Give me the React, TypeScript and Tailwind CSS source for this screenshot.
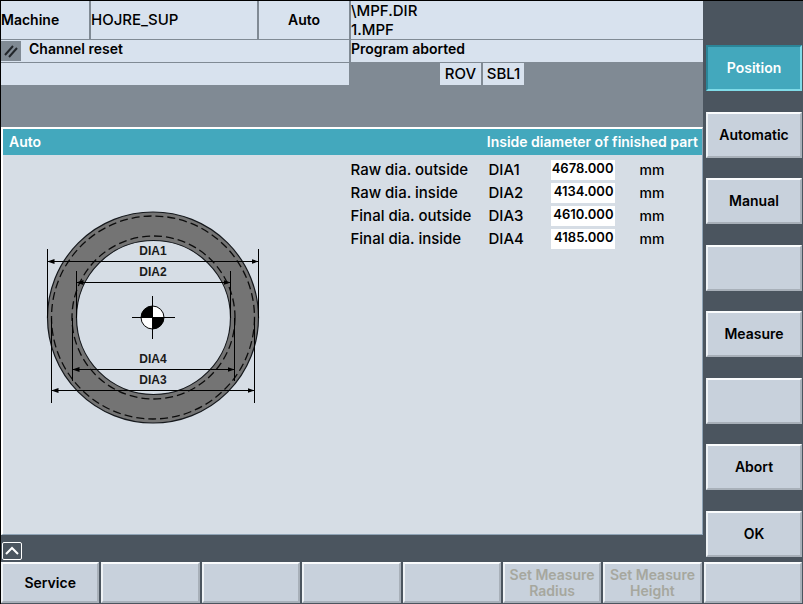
import { useState } from "react";
import clsx from "clsx";

type Field = {
  id: string;
  label: string;
  value: string;
};

type Softkey = {
  label: string;
  disabled?: boolean;
};

const initialFields: Field[] = [
  { id: "DIA1", label: "Raw dia. outside", value: "4678.000" },
  { id: "DIA2", label: "Raw dia. inside", value: "4134.000" },
  { id: "DIA3", label: "Final dia. outside", value: "4610.000" },
  { id: "DIA4", label: "Final dia. inside", value: "4185.000" },
];

const verticalKeys = ["Position", "Automatic", "Manual", "", "Measure", "", "Abort", "OK"];

const horizontalKeys: Softkey[] = [
  { label: "Service" },
  { label: "" },
  { label: "" },
  { label: "" },
  { label: "" },
  { label: "Set Measure Radius", disabled: true },
  { label: "Set Measure Height", disabled: true },
  { label: "" },
];

function RingDiagram() {
  return (
    <svg width="250" height="240" viewBox="0 0 250 240" role="img" aria-label="Ring diameters">
      <defs>
        <marker id="arrow" viewBox="0 0 7 5" refX="7" refY="2.5" markerWidth="7" markerHeight="5" markerUnits="userSpaceOnUse" orient="auto-start-reverse">
          <path d="M0 0 L7 2.5 L0 5 Z" fill="#000" />
        </marker>
      </defs>

      {/* ring body */}
      <path
        d="M17.5 122.5a105.5 105.5 0 1 0 211 0a105.5 105.5 0 1 0 -211 0Z M46.5 122.5a77 77 0 1 0 154 0a77 77 0 1 0 -154 0Z"
        fill="#747474"
        fillRule="evenodd"
        stroke="#15181c"
        strokeWidth="1.2"
      />
      <g fill="none" stroke="#0c0c0c" strokeWidth="1.3" strokeDasharray="8 4">
        <circle cx="123" cy="122.5" r="101.5" />
        <circle cx="123.5" cy="122.5" r="81.5" />
      </g>

      {/* extension lines */}
      <path
        d="M17.5 54V123M228.5 54V123M46.5 76V123M200.5 76V123M42.5 123V186M204.5 123V186M21.5 123V208M224.5 123V208"
        stroke="#000"
        fill="none"
      />

      {/* dimension lines */}
      <g stroke="#000">
        <path d="M17.5 66.5H228.5" markerStart="url(#arrow)" markerEnd="url(#arrow)" />
        <path d="M46.5 87.5H200.5" markerStart="url(#arrow)" markerEnd="url(#arrow)" />
        <path d="M42.5 174.5H204.5" markerStart="url(#arrow)" markerEnd="url(#arrow)" />
        <path d="M21.5 195.5H224.5" markerStart="url(#arrow)" markerEnd="url(#arrow)" />
      </g>

      <g className="font-['Liberation_Sans',sans-serif] text-[12px] font-bold" fill="#1a1a1a" textAnchor="middle">
        <text x="123" y="60">DIA1</text>
        <text x="123" y="81">DIA2</text>
        <text x="123" y="168">DIA4</text>
        <text x="123" y="189">DIA3</text>
      </g>

      {/* centre mark */}
      <circle cx="122.5" cy="122.5" r="11.5" fill="#fff" stroke="#000" />
      <path d="M122.5 122.5V111a11.5 11.5 0 0 0 -11.5 11.5ZM122.5 122.5V134a11.5 11.5 0 0 0 11.5 -11.5Z" fill="#000" />
      <path d="M102 122.5H145M122.5 101V144" stroke="#000" />
    </svg>
  );
}

const keyBase =
  "flex items-center justify-center text-center text-[14px] leading-4 font-semibold border-2";
const keyIdle =
  "bg-[#c8d1dc] border-t-[#fafcfd] border-l-[#eef2f5] border-r-[#a8b0b9] border-b-[#a8b0b9] text-black disabled:text-[#a6a79e]";
const keyActive =
  "bg-[#43a8bd] border-t-[#2b8598] border-l-[#2b8598] border-r-[#7fdbe8] border-b-[#7fdbe8] text-white";

export default function App() {
  const [fields, setFields] = useState(initialFields);
  const [active, setActive] = useState("Position");

  const updateField = (id: string, value: string) => {
    setFields(fields.map((f) => (f.id === id ? { ...f, value } : f)));
  };

  return (
    <div className="min-h-screen flex flex-col bg-[#4b555f] border-t border-l border-black pr-px font-['Inter','Liberation_Sans',sans-serif] text-[15px] leading-5 font-medium text-black">
      <div className="flex-1 flex">
        <div className="flex-1 min-w-0 flex flex-col">
          {/* status header */}
          <header className="h-[126px] bg-[#808a94] grid grid-cols-[87fr_88fr] gap-x-[2px] items-start">
            <div className="flex flex-col gap-px">
              <div className="h-[38px] grid grid-cols-[88fr_166fr_90fr] gap-x-[2px] items-stretch">
                <div className="bg-[#d8e2ee] flex items-center text-[14px] font-semibold">Machine</div>
                <div className="bg-[#d8e2ee] flex items-center">HOJRE_SUP</div>
                <div className="bg-[#d8e2ee] flex items-center justify-center text-[14px] font-semibold">Auto</div>
              </div>
              <div className="h-[22px] bg-[#d8e2ee] flex items-center gap-2">
                <span className="w-5 h-5 bg-[#808a94] flex items-center justify-center">
                  <svg width="14" height="14" viewBox="0 0 14 14" fill="none" stroke="#22262b" strokeWidth="2" aria-hidden="true">
                    <path d="M1 11L9 2M5 13L13 4" />
                  </svg>
                </span>
                <span className="pb-1 text-[14px] font-semibold">Channel reset</span>
              </div>
              <div className="h-[22px] bg-[#d8e2ee]" />
            </div>
            <div className="flex flex-col gap-px">
              <div className="h-[38px] bg-[#d8e2ee] leading-[19px]">
                <div>\MPF.DIR</div>
                <div>1.MPF</div>
              </div>
              <div className="h-[22px] bg-[#d8e2ee] pb-1 flex items-center text-[14px] font-semibold">Program aborted</div>
              <div className="pl-[89px] flex gap-[2px]">
                <span className="w-[41px] h-[22px] bg-[#d8e2ee] flex items-center justify-center">ROV</span>
                <span className="w-[41px] h-[22px] bg-[#d8e2ee] flex items-center justify-center">SBL1</span>
              </div>
            </div>
          </header>

          {/* work area */}
          <main className="flex-1 bg-[#d6dde5] border-t-2 border-l-2 border-r border-b border-t-white border-l-white border-r-[#8fa3b5] border-b-[#8fa3b5]">
            <div className="h-[26px] bg-[#43a8bd] pl-[6px] pr-1 flex items-center justify-between text-[14px] text-white font-semibold">
              <h1>Auto</h1>
              <h2>Inside diameter of finished part</h2>
            </div>
            <div className="grid grid-cols-[87fr_88fr] pt-[5px]">
              <div className="pl-[27px] pt-[35px]">
                <RingDiagram />
              </div>
              <form className="flex flex-col gap-[3px]" onSubmit={(e) => e.preventDefault()}>
                {fields.map((f) => (
                  <div key={f.id} className="h-5 flex items-center">
                    <label htmlFor={f.id} className="flex">
                      <span className="w-[138px]">{f.label}</span>
                      <span className="w-[62px]">{f.id}</span>
                    </label>
                    <input
                      id={f.id}
                      type="text"
                      value={f.value}
                      onChange={(e) => updateField(f.id, e.target.value)}
                      className="w-[64px] h-5 bg-white pb-1 pr-px text-right text-[13px] font-semibold"
                    />
                    <span className="pl-[25px] text-[14px]">mm</span>
                  </div>
                ))}
              </form>
            </div>
          </main>

          <div className="h-[27px] pl-px flex items-end pb-[2px]">
            <button type="button" aria-label="Recall" className="w-5 h-[18px] border border-white rounded-xs flex items-center justify-center">
              <svg width="14" height="10" viewBox="0 0 14 10" fill="none" stroke="#fff" strokeWidth="2" aria-hidden="true">
                <path d="M1 8L7 2L13 8" />
              </svg>
            </button>
          </div>
        </div>

        <nav className="w-[99px] shrink-0 pt-11 pb-[5px] pl-[3px] flex flex-col justify-between gap-1">
          {verticalKeys.map((label, i) => (
            <button
              key={i}
              type="button"
              aria-label={label || `Softkey ${i + 1}`}
              onClick={() => label && setActive(label)}
              className={clsx(keyBase, "h-[46px]", label && label === active ? keyActive : keyIdle)}
            >
              {label}
            </button>
          ))}
        </nav>
      </div>

      <nav className="grid grid-cols-8 gap-[2px] pb-px">
        {horizontalKeys.map((key, i) => (
          <button
            key={i}
            type="button"
            disabled={key.disabled}
            aria-label={key.label || `Softkey ${i + 9}`}
            className={clsx(keyBase, keyIdle, "h-[41px]")}
          >
            {key.label}
          </button>
        ))}
      </nav>
    </div>
  );
}
